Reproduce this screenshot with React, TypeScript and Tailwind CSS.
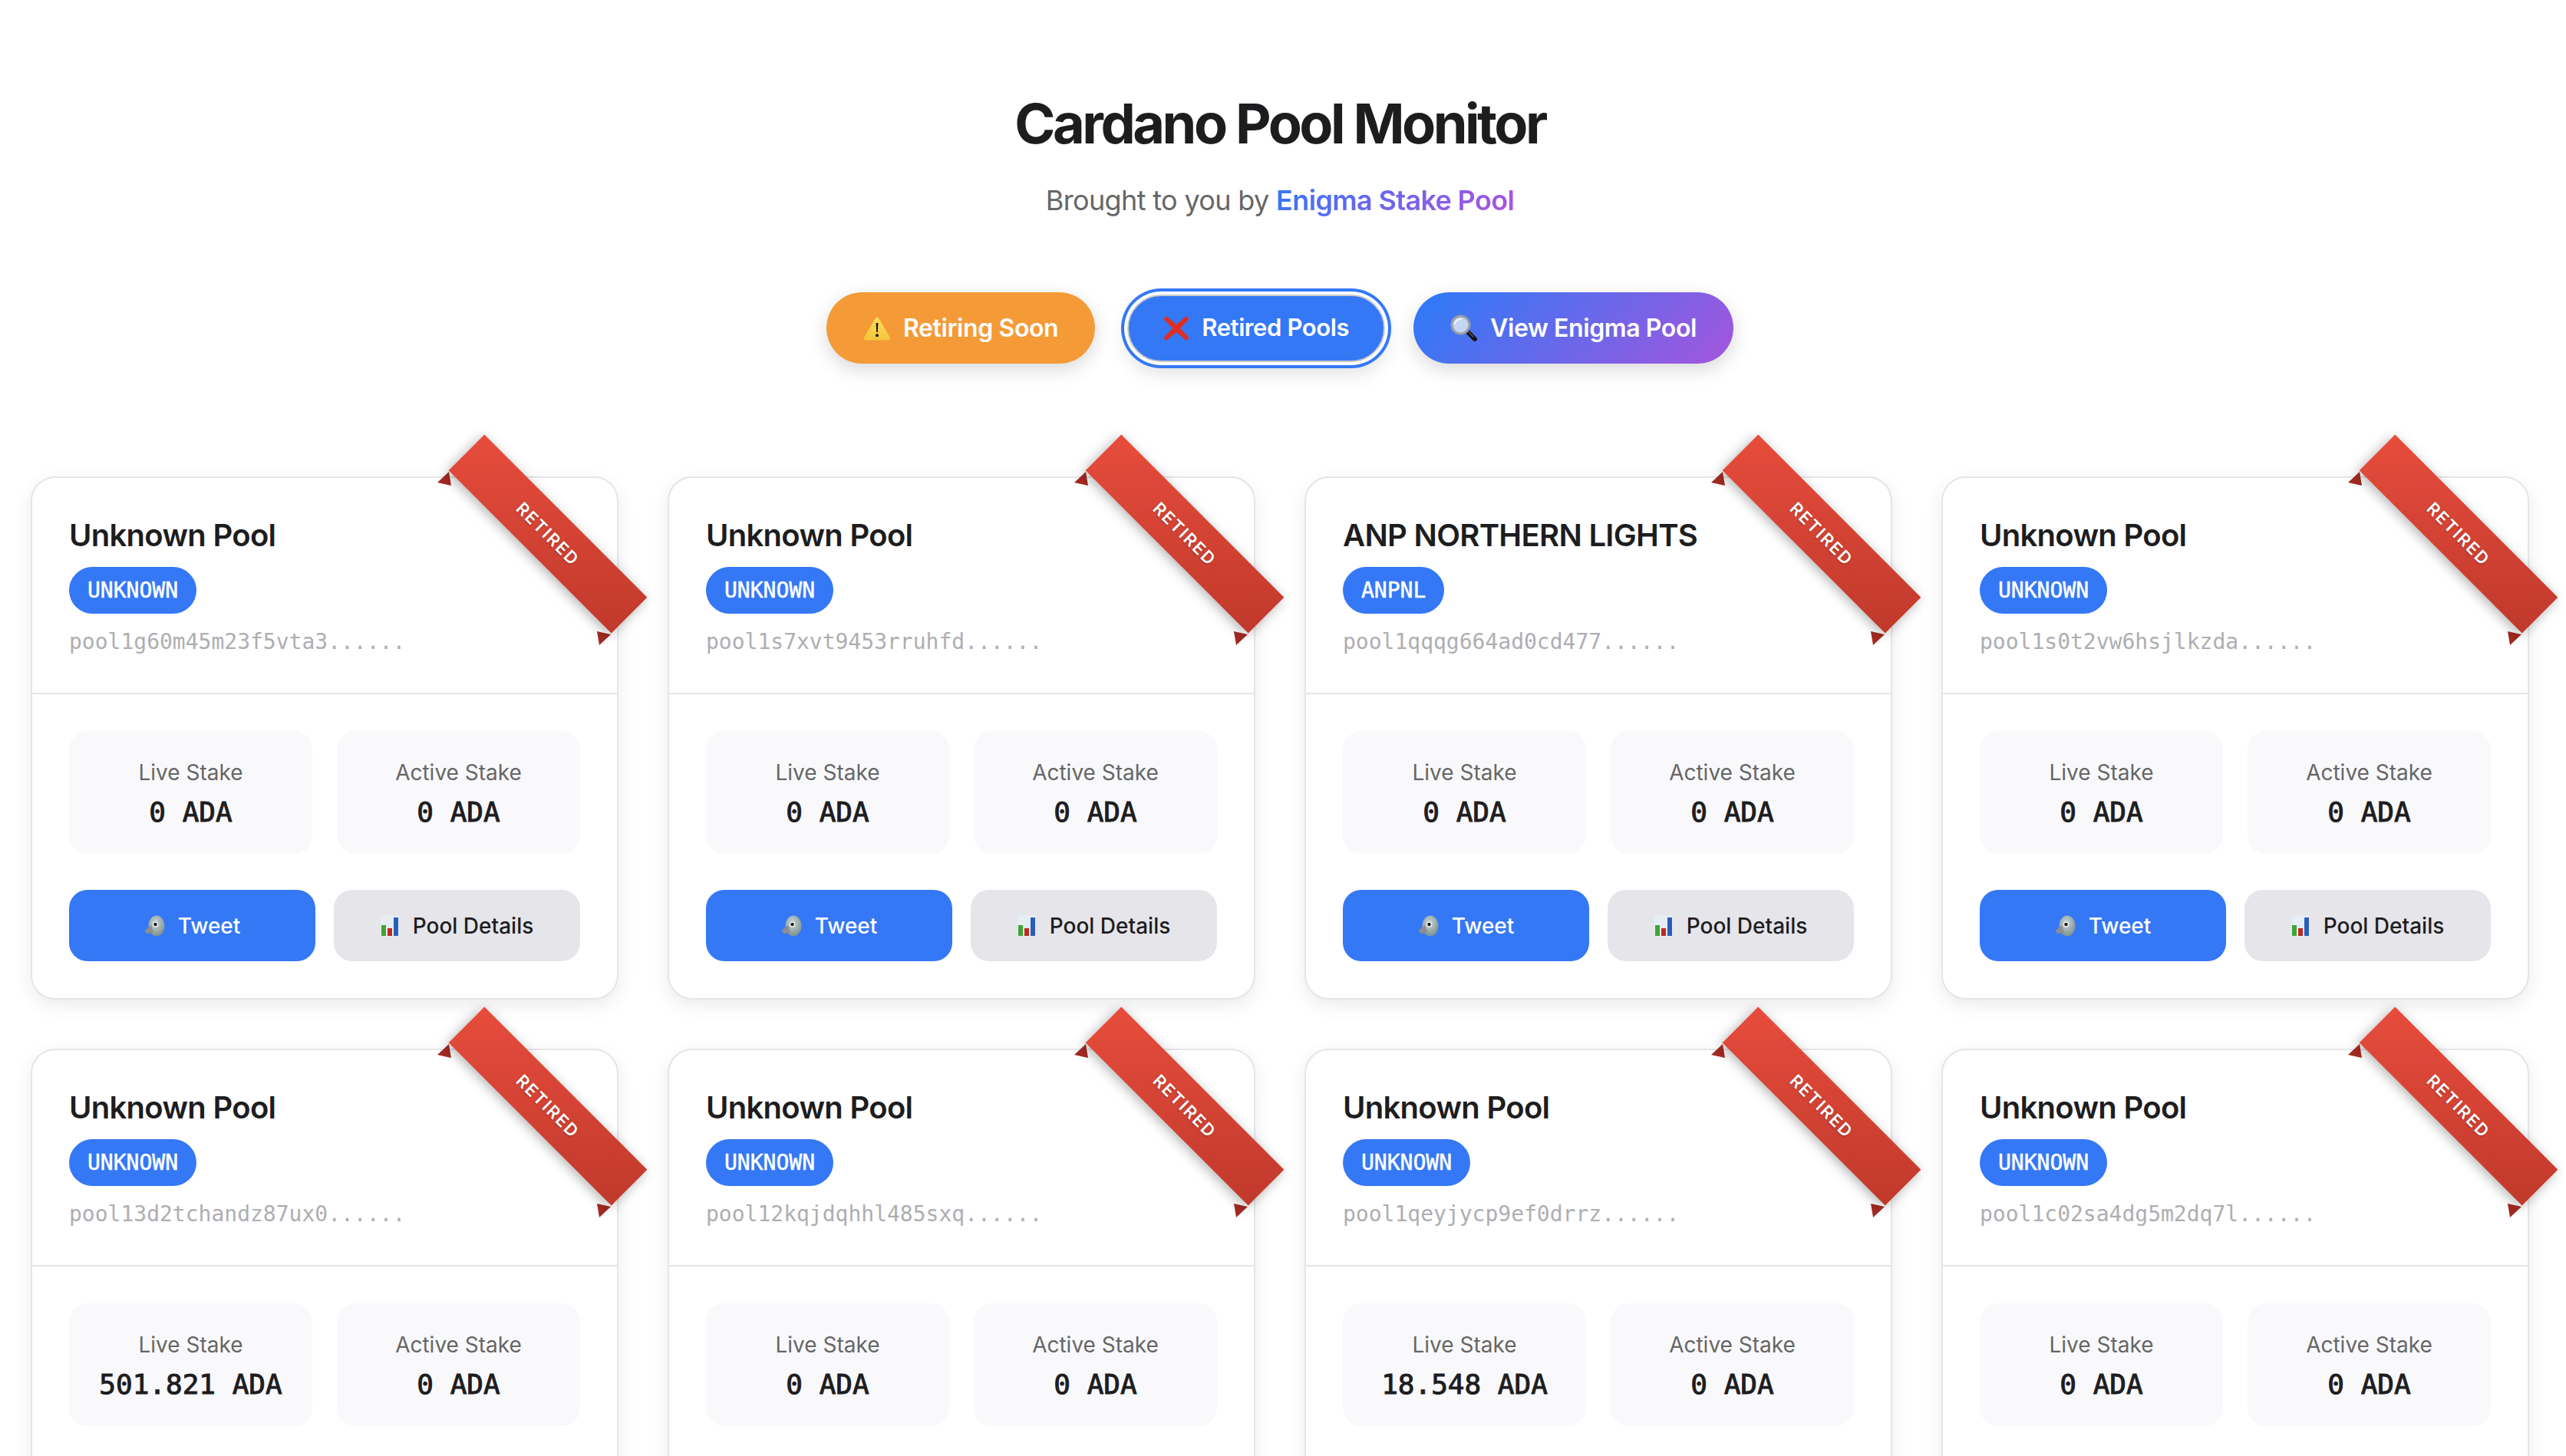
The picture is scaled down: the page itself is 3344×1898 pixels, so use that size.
const sans = "font-['Inter','Noto_Sans',sans-serif]";
const mono = "font-['DejaVu_Sans_Mono','Liberation_Mono',monospace]";

const pools = [
  { name: "Unknown Pool", ticker: "UNKNOWN", id: "pool1g60m45m23f5vta3", live: "0" },
  { name: "Unknown Pool", ticker: "UNKNOWN", id: "pool1s7xvt9453rruhfd", live: "0" },
  { name: "ANP NORTHERN LIGHTS", ticker: "ANPNL", id: "pool1qqqg664ad0cd477", live: "0" },
  { name: "Unknown Pool", ticker: "UNKNOWN", id: "pool1s0t2vw6hsjlkzda", live: "0" },
  { name: "Unknown Pool", ticker: "UNKNOWN", id: "pool13d2tchandz87ux0", live: "501.821" },
  { name: "Unknown Pool", ticker: "UNKNOWN", id: "pool12kqjdqhhl485sxq", live: "0" },
  { name: "Unknown Pool", ticker: "UNKNOWN", id: "pool1qeyjycp9ef0drrz", live: "18.548" },
  { name: "Unknown Pool", ticker: "UNKNOWN", id: "pool1c02sa4dg5m2dq7l", live: "0" },
];

function WarningIcon() {
  return (
    <svg width="36" height="32" viewBox="0 0 36 32" className="shrink-0">
      <defs>
        <linearGradient id="warn" x1="0" y1="0" x2="0" y2="1">
          <stop offset="0" stopColor="#fbdc5a" />
          <stop offset="1" stopColor="#f5c53c" />
        </linearGradient>
      </defs>
      <path d="M18 1.5 C19 1.5 19.6 2 20.2 3 L35 28 C35.9 29.8 35 31.5 33 31.5 L3 31.5 C1 31.5 0.1 29.8 1 28 L15.8 3 C16.4 2 17 1.5 18 1.5 Z" fill="url(#warn)" />
      <path d="M16.6 9 H19.4 L18.8 21 H17.2 Z" fill="#1a1a1a" />
      <circle cx="18" cy="25.2" r="2" fill="#1a1a1a" />
    </svg>
  );
}

function CrossIcon() {
  return (
    <svg width="34" height="34" viewBox="0 0 34 34" className="shrink-0">
      <path d="M4 1 L17 12 L30 1 L33.5 5 L22 17 L33.5 29 L30 33 L17 22 L4 33 L0.5 29 L12 17 L0.5 5 Z" fill="#dc2f22" />
    </svg>
  );
}

function SearchIcon() {
  return (
    <svg width="36" height="36" viewBox="0 0 36 36" className="shrink-0">
      <path d="M21 21 L32 32" stroke="#111" strokeWidth="6" strokeLinecap="round" />
      <path d="M23 22 L30 29" stroke="#555" strokeWidth="1.5" strokeLinecap="round" />
      <circle cx="13.5" cy="13.5" r="11.5" fill="#c5d6f2" stroke="#9a9fa6" strokeWidth="3" />
      <path d="M6 12 C7 8 10 6 14 6" stroke="#eef4ff" strokeWidth="2" fill="none" strokeLinecap="round" />
    </svg>
  );
}

function BirdIcon() {
  return (
    <svg width="27" height="28" viewBox="0 0 27 28" className="shrink-0">
      <defs>
        <radialGradient id="bird" cx="0.45" cy="0.35" r="0.75">
          <stop offset="0" stopColor="#c8d6d4" />
          <stop offset="1" stopColor="#71878a" />
        </radialGradient>
      </defs>
      <ellipse cx="16" cy="14" rx="10.5" ry="13.5" fill="url(#bird)" />
      <path d="M9 13 L0.5 20 L3 24 L12 23 Z" fill="#8b8f90" />
      <circle cx="14.5" cy="12" r="3.8" fill="#f2f5f4" />
      <circle cx="14.5" cy="12" r="2.3" fill="#1d1d1f" />
    </svg>
  );
}

function ChartIcon() {
  return (
    <svg width="24" height="28" viewBox="0 0 24 28" className="shrink-0">
      <rect width="24" height="28" fill="#e6edf5" />
      <rect x="1" y="13" width="6" height="14" fill="#3fa535" />
      <rect x="9" y="17" width="6" height="10" fill="#bf2a1f" />
      <rect x="17" y="3" width="6" height="24" fill="#2a5fb8" />
    </svg>
  );
}

function Ribbon() {
  return (
    <>
      <svg width="232" height="232" viewBox="0 0 232 232" className="absolute right-[4px] top-[-11px]">
        <polygon points="17,3 2,17 20,21" fill="#a32a22" />
        <polygon points="210,211 228,215 213,229" fill="#a32a22" />
      </svg>
      <div
        className={`absolute right-[-60px] top-[40px] flex h-[66px] w-[300px] rotate-45 items-center justify-center bg-[linear-gradient(135deg,#e74c3c,#c0392b)] text-[22px] font-semibold tracking-[2px] text-white shadow-[0_4px_16px_rgba(0,0,0,0.3)] [text-shadow:0_1px_2px_rgba(0,0,0,0.3)] ${sans}`}
      >
        RETIRED
      </div>
    </>
  );
}

function Stat({ label, value }: { label: string; value: string }) {
  return (
    <div className="flex h-[160px] flex-col items-center rounded-3xl bg-[#f9f9fb] pt-[35px]">
      <p className="text-[28px] leading-[38px] text-[#666666]">{label}</p>
      <p className={`mt-[9px] text-[36px] leading-[48px] whitespace-pre text-[#1d1d1f] [-webkit-text-stroke:1px_#1d1d1f] ${mono}`}>
        {value} ADA
      </p>
    </div>
  );
}

function PoolCard({ name, ticker, id, live, showActions }: (typeof pools)[number] & { showActions: boolean }) {
  return (
    <div className="relative h-[682px] rounded-[32px] border-2 border-[#e5e5ea] bg-white shadow-[0_8px_24px_rgba(0,0,0,0.08)]">
      <Ribbon />
      <div className="h-[282px] border-b-2 border-[#e5e5ea] px-12 pt-[51px]">
        <h2 className="text-[40px] leading-[48px] font-semibold tracking-[-0.7px] text-[#1d1d1f]">{name}</h2>
        <div className="mt-[17px] flex">
          <span className={`flex h-[61px] items-center rounded-full bg-[#3478f6] px-6 text-[28px] text-white [-webkit-text-stroke:0.5px_#ffffff] ${mono}`}>
            {ticker}
          </span>
        </div>
        <p className={`mt-[17px] text-[28px] leading-[40px] text-[#aeaeb2] ${mono}`}>{id}......</p>
      </div>
      <div className="px-12 pt-[48px]">
        <div className="grid grid-cols-2 gap-8">
          <Stat label="Live Stake" value={live} />
          <Stat label="Active Stake" value="0" />
        </div>
        {/* second row's buttons fall below the fold */}
        {showActions && (
          <div className="mt-[47px] grid grid-cols-2 gap-6">
            <button className="flex h-[93px] items-center justify-center gap-[17px] rounded-3xl bg-[#3478f6] text-[28px] font-medium text-white">
              <BirdIcon />
              Tweet
            </button>
            <button className="flex h-[93px] items-center justify-center gap-[18px] rounded-3xl bg-[#e5e5ea] text-[28px] font-medium text-[#1d1d1f]">
              <ChartIcon />
              Pool Details
            </button>
          </div>
        )}
      </div>
    </div>
  );
}

export default function App() {
  return (
    <div className={`h-[1898px] w-[3344px] overflow-hidden bg-white ${sans}`}>
      <div className="w-[3336px] px-10 pt-[116px]">
        <div className="text-center">
          <h1 className="text-[72px] leading-[90px] font-bold tracking-[-3.5px] text-[#1d1d1f]">Cardano Pool Monitor</h1>
          <p className="mt-[28px] text-[36px] leading-[54px] tracking-[-0.65px] text-[#666666]">
            Brought to you by{" "}
            <span className="bg-[linear-gradient(135deg,#3478f6,#af52de)] bg-clip-text font-semibold text-transparent">
              Enigma Stake Pool
            </span>
          </p>
        </div>
        <div className="mt-[93px] flex items-center justify-center gap-8">
          <button className="flex h-[93px] items-center gap-4 rounded-full bg-[#f49b37] px-12 text-[32px] font-semibold tracking-[-0.4px] text-white shadow-[0_8px_24px_rgba(0,0,0,0.15)]">
            <WarningIcon />
            Retiring Soon
          </button>
          <button className="ml-[10px] mr-[5px] flex h-[88px] items-center gap-4 rounded-full border-2 border-[#c9c9cc] bg-[#3478f6] px-[45px] text-[31px] font-semibold tracking-[-0.4px] text-white shadow-[0_0_0_4px_#ffffff,0_0_0_8px_#3478f6,0_12px_28px_rgba(0,0,0,0.15)]">
            <CrossIcon />
            Retired Pools
          </button>
          <button className="flex h-[93px] items-center gap-4 rounded-full bg-[linear-gradient(135deg,#3478f6_8%,#a555dc_100%)] px-12 text-[32px] font-semibold tracking-[-0.4px] text-white shadow-[0_8px_24px_rgba(0,0,0,0.15)]">
            <SearchIcon />
            View Enigma Pool
          </button>
        </div>
        <div className="mt-[147px] grid grid-cols-4 gap-16">
          {pools.map((pool, i) => (
            <PoolCard key={pool.id} {...pool} showActions={i < 4} />
          ))}
        </div>
      </div>
    </div>
  );
}
